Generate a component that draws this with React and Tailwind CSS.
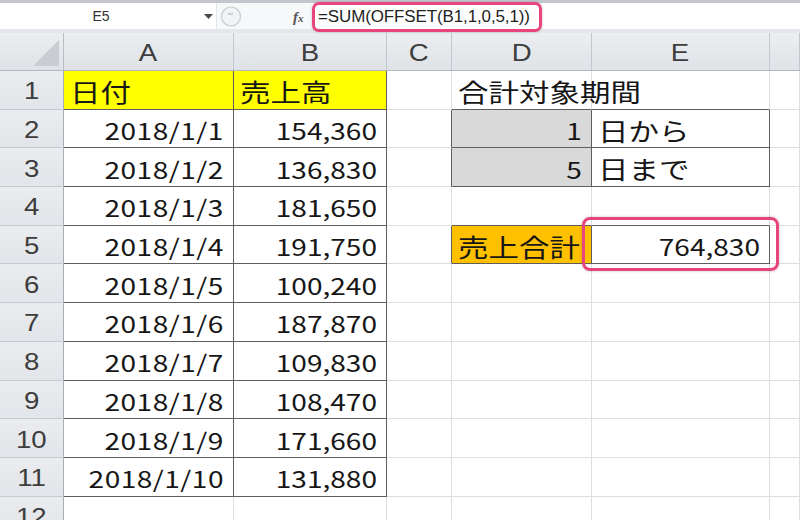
import React from "react";

const COLS = [
  { k: "A", w: "w-[170px]" },
  { k: "B", w: "w-[153px]" },
  { k: "C", w: "w-[65px]" },
  { k: "D", w: "w-[140px]" },
  { k: "E", w: "w-[178px]" },
  { k: "F", w: "w-[30px]" },
];

const DATA = [
  { A: "日付", B: "売上高", D: "合計対象期間" },
  { A: "2018/1/1", B: "154,360", D: "1", E: "日から" },
  { A: "2018/1/2", B: "136,830", D: "5", E: "日まで" },
  { A: "2018/1/3", B: "181,650" },
  { A: "2018/1/4", B: "191,750", D: "売上合計", E: "764,830" },
  { A: "2018/1/5", B: "100,240" },
  { A: "2018/1/6", B: "187,870" },
  { A: "2018/1/7", B: "109,830" },
  { A: "2018/1/8", B: "108,470" },
  { A: "2018/1/9", B: "171,660" },
  { A: "2018/1/10", B: "131,880" },
  {},
];

const isNum = (t) => /^[0-9,/]+$/.test(t);

function Cell({ r, c, w }) {
  const row = DATA[r - 1];
  const text = row[c];
  const inTable = (c === "A" || c === "B") && r <= 11;
  const rightDark =
    inTable ||
    (c === "C" && (r === 2 || r === 3 || r === 5)) ||
    ((c === "D" || c === "E") && (r === 2 || r === 3 || r === 5));
  const bottomDark =
    inTable || ((c === "D" || c === "E") && r >= 1 && r <= 5);

  let bg = "bg-white";
  if (r === 1 && (c === "A" || c === "B")) bg = "bg-[#ffff00]";
  if (c === "D" && (r === 2 || r === 3)) bg = "bg-[#d9d9d9]";
  if (c === "D" && r === 5) bg = "bg-[#ffc000]";

  const rb = rightDark ? "border-r-[#5e5e5e]" : "border-r-[#dcdee0]";
  const bb = bottomDark ? "border-b-[#5e5e5e]" : "border-b-[#dcdee0]";

  const num = text && isNum(text);
  const isDate = text && text.includes("/");
  const highlight = r === 5 && c === "E";

  return (
    <div
      className={`${w} h-full shrink-0 border-r border-b ${rb} ${bb} ${bg} flex items-center ${
        num ? "justify-end pr-[9px]" : "justify-start pl-[6px]"
      } ${highlight ? "relative" : ""}`}
    >
      {text &&
        (num ? (
          <span
            className={`inline-block origin-right scale-x-[1.22] text-[23px] leading-none text-[#161616] pt-[4px] whitespace-nowrap ${
              isDate ? "tracking-[0.4px]" : ""
            }`}
          >
            {text}
          </span>
        ) : (
          <span className="inline-block origin-left scale-x-[1.22] text-[25px] leading-none text-[#161616] pt-[3px] whitespace-nowrap">
            {text}
          </span>
        ))}
      {highlight && (
        <div className="absolute -left-[10px] -right-[10px] -top-[9px] -bottom-[8px] z-10 rounded-[8px] border-[3px] border-[#e9457d] shadow-[0_0_3px_rgba(0,0,0,0.25)]" />
      )}
    </div>
  );
}

function FormulaBar() {
  return (
    <div className="h-[33px] w-full flex flex-col bg-[#e3e6ea]">
      <div className="h-[3px] bg-[#c3c7cd]" />
      <div className="h-[26px] flex items-stretch bg-white">
        <div className="w-[217px] shrink-0 relative flex items-center justify-center bg-white border-r border-r-[#e4e6e9]">
          <span className="text-[14px] text-[#333] pr-[14px] font-['Liberation_Sans',sans-serif]">E5</span>
          <svg className="absolute left-[204px] top-[11px]" width="9" height="6" viewBox="0 0 9 6">
            <path d="M0 0 L9 0 L4.5 5 Z" fill="#4a4a4a" />
          </svg>
        </div>
        <div className="w-[95px] shrink-0 relative bg-[#f7f8f9]">
          <svg className="absolute left-[3px] top-[2px]" width="22" height="23" viewBox="0 0 22 23">
            <circle cx="11" cy="11.5" r="9.5" fill="#f2f3f5" stroke="#c8cbcf" strokeWidth="1.2" />
            <path d="M8 9 L13 9" stroke="#b4b7bb" strokeWidth="1.2" />
          </svg>
          <span className="absolute left-[76px] top-[3px] text-[15px] italic font-bold text-[#555] font-['Liberation_Serif',serif]">
            f<span className="text-[11px]">x</span>
          </span>
        </div>
        <div className="flex-1 relative bg-white">
          <div className="absolute left-0 -top-[1px] w-[230px] h-[30px] rounded-[7px] border-[3px] border-[#e9457d] bg-white flex items-center pl-[3px] shadow-[0_0_3px_rgba(0,0,0,0.2)] z-10">
            <span className="inline-block origin-left scale-x-[1.06] text-[16px] text-[#222] tracking-[-0.1px] whitespace-nowrap font-['Liberation_Sans',sans-serif]">
              =SUM(OFFSET(B1,1,0,5,1))
            </span>
          </div>
        </div>
      </div>
      <div className="h-[4px] bg-[#e3e6ea]" />
    </div>
  );
}

function HeaderRow() {
  return (
    <div className="h-[38px] flex bg-gradient-to-b from-[#eceef1] to-[#dfe2e6] border-b border-b-[#b4b9c0]">
      <div className="w-[64px] h-full shrink-0 relative border-r border-r-[#b9bec5]">
        <svg className="absolute right-[4px] bottom-[4px]" width="26" height="26" viewBox="0 0 26 26">
          <path d="M26 0 L26 26 L0 26 Z" fill="#c9ccd1" />
        </svg>
      </div>
      {COLS.map((col) => (
        <div
          key={col.k}
          className={`${col.w} h-full shrink-0 border-r border-r-[#c3c7cd] flex items-center justify-center pt-[3px]`}
        >
          <span className="inline-block scale-x-[1.15] text-[24px] leading-none text-[#3d3d3d] font-['Liberation_Sans',sans-serif]">
            {col.k === "F" ? "" : col.k}
          </span>
        </div>
      ))}
    </div>
  );
}

export default function App() {
  return (
    <div className="w-[800px] h-[520px] overflow-hidden bg-white font-['Noto_Sans_CJK_JP',sans-serif]">
      <FormulaBar />
      <HeaderRow />
      {DATA.map((_, i) => {
        const r = i + 1;
        return (
          <div key={r} className="h-[38.7px] flex">
            <div className="w-[64px] h-full shrink-0 bg-gradient-to-b from-[#eaecef] to-[#e2e5e9] border-r border-r-[#a9aeb5] border-b border-b-[#c6cacf] flex items-center justify-center pt-[3px]">
              <span className="inline-block scale-x-[1.15] text-[24px] leading-none text-[#3d3d3d] font-['Liberation_Sans',sans-serif]">
                {r}
              </span>
            </div>
            {COLS.map((col) => (
              <Cell key={col.k} r={r} c={col.k} w={col.w} />
            ))}
          </div>
        );
      })}
    </div>
  );
}
